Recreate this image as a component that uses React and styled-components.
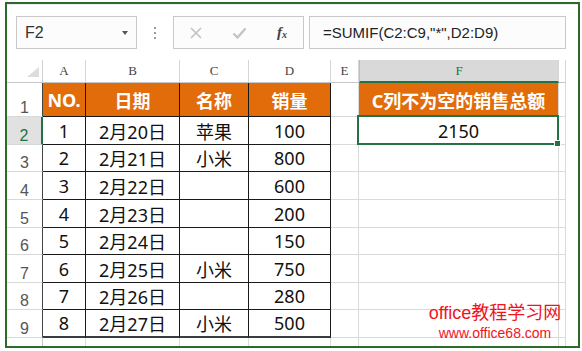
import React from 'react';
import styled, { createGlobalStyle, css } from 'styled-components';

const GREEN = '#217346';
const ORANGE = '#e26b0a';
const GRID = '#dadada';
const INK = '#1a1a1a';

const GlobalStyle = createGlobalStyle`
  html, body { margin: 0; padding: 0; background: #fff; }
  body { font-family: "Noto Sans", "Noto Sans CJK SC", sans-serif; }
`;

const Frame = styled.div`
  position: relative;
  box-sizing: border-box;
  width: 575px;
  height: 346px;
  margin: 2px 0 0 5px;
  border: 2px solid #2e6b2a;
  background: #fff;
  overflow: hidden;
  display: flex;
  flex-direction: column;
`;

const Toolbar = styled.div`
  flex: none;
  box-sizing: border-box;
  height: 56px;
  display: flex;
  align-items: flex-start;
  padding: 11px 0 0 9px;
  border-top: 1px solid #ededed;
`;

const Box = styled.div`
  box-sizing: border-box;
  height: 33px;
  border: 1px solid #c9c9c9;
  background: #fcfcfc;
  display: flex;
  align-items: center;
`;

const NameBox = styled(Box)`
  width: 121px;
  justify-content: space-between;
  padding: 0 8px 0 8px;
  font-family: "Liberation Sans", sans-serif;
  font-size: 16px;
  color: #333;
`;

const Caret = styled.span`
  width: 0;
  height: 0;
  border-left: 3px solid transparent;
  border-right: 3px solid transparent;
  border-top: 4px solid #555;
`;

const Dots = styled.div`
  width: 36px;
  height: 33px;
  display: flex;
  flex-direction: column;
  align-items: center;
  justify-content: center;
  gap: 3px;
`;

const Dot = styled.span`
  width: 2px;
  height: 2px;
  background: #9a9a9a;
`;

const FxBox = styled(Box)`
  width: 131px;
  padding-left: 16px;
  gap: 30px;
`;

const Fx = styled.span`
  font-family: "Liberation Serif", serif;
  font-style: italic;
  font-weight: bold;
  font-size: 15px;
  color: #444;
  sub {
    font-size: 10px;
    vertical-align: baseline;
    position: relative;
    top: 1px;
  }
`;

const Formula = styled(Box)`
  width: 257px;
  margin-left: 5px;
  padding-left: 13px;
  font-family: "Liberation Sans", sans-serif;
  font-size: 15px;
  color: #222;
`;

const Sheet = styled.div`
  flex: 1;
  display: grid;
  grid-template-columns: 36px 43px 94px 69px 82px 28px 200px 7px;
  grid-template-rows: 23px 34px 28px 27px 28px 28px 27px 28px 27px 28px 24px;
  align-content: start;
  justify-content: start;
  overflow: hidden;
`;

const Cell = styled.div`
  box-sizing: border-box;
  display: flex;
  align-items: center;
  justify-content: center;
  border-right: 1px solid ${GRID};
  border-bottom: 1px solid ${GRID};
  min-width: 0;
  white-space: nowrap;
`;

const Corner = styled(Cell)`
  align-items: flex-end;
  justify-content: flex-end;
  padding: 0 3px 5px 0;
  border-right-color: #d0d0d0;
  border-bottom-color: #c6c6c6;
`;

const Triangle = styled.span`
  width: 0;
  height: 0;
  border-left: 12px solid transparent;
  border-bottom: 10px solid #dcdcdc;
`;

const ColHead = styled(Cell)`
  font-family: "Liberation Serif", serif;
  font-size: 13px;
  color: #444;
  border-right-color: #d6d6d6;
  border-bottom-color: #c6c6c6;
  ${(p) =>
    p.$selected &&
    css`
      background: #d9d9d9;
      color: ${GREEN};
      border-bottom: 2px solid ${GREEN};
      border-left: 1px solid #bdbdbd;
    `}
`;

const RowHead = styled(Cell)`
  align-items: flex-end;
  font-family: "Liberation Sans", sans-serif;
  font-size: 16px;
  line-height: 16px;
  color: #555;
  border-bottom-color: #d8d8d8;
  border-right-color: ${(p) => (p.$edge ? '#444' : '#c6c6c6')};
  ${(p) =>
    p.$selected &&
    css`
      background: #e1e1e1;
      color: ${GREEN};
      border-right: 2px solid ${GREEN};
    `}
`;

const Title = styled(Cell)`
  background: ${ORANGE};
  color: #fff;
  font-weight: bold;
  font-size: 18px;
  border-right-color: ${(p) => (p.$boxed ? INK : GRID)};
  border-bottom-color: ${(p) => (p.$boxed ? INK : GRID)};
`;

const Data = styled(Cell)`
  font-size: 18px;
  color: #111;
  border-right-color: ${INK};
  border-bottom: ${(p) => (p.$last ? `2px solid #3c3c3c` : `1px solid ${INK}`)};
`;

const Result = styled(Cell)`
  position: relative;
  font-size: 18px;
  color: #111;
`;

const Selection = styled.span`
  position: absolute;
  left: -2px;
  top: -2px;
  right: -1px;
  bottom: -1px;
  border: 2px solid ${GREEN};
  pointer-events: none;
`;

const Handle = styled.span`
  position: absolute;
  right: -4px;
  bottom: -4px;
  width: 5px;
  height: 5px;
  background: ${GREEN};
  border: 1px solid #fff;
`;

const Watermark = styled.div`
  position: absolute;
  left: 408px;
  top: 298px;
  width: 160px;
  text-align: center;
  color: #f0141e;
  font-family: "Liberation Sans", "Noto Sans CJK SC", sans-serif;
`;

const MarkTitle = styled.div`
  font-size: 18px;
  line-height: 23px;
`;

const MarkUrl = styled.div`
  font-size: 14px;
  line-height: 16px;
`;

const cols = ['A', 'B', 'C', 'D', 'E', 'F', ''];
const rows = [
  [1, '2月20日', '苹果', 100],
  [2, '2月21日', '小米', 800],
  [3, '2月22日', '', 600],
  [4, '2月23日', '', 200],
  [5, '2月24日', '', 150],
  [6, '2月25日', '小米', 750],
  [7, '2月26日', '', 280],
  [8, '2月27日', '小米', 500],
];

function CloseIcon() {
  return (
    <svg width="12" height="12" viewBox="0 0 12 12">
      <path d="M1 1L11 11M11 1L1 11" stroke="#c2c2c2" strokeWidth="1.6" fill="none" />
    </svg>
  );
}

function CheckIcon() {
  return (
    <svg width="15" height="12" viewBox="0 0 15 12">
      <path d="M1.5 6.5L5.5 10.5L13.5 1.5" stroke="#c4c4c4" strokeWidth="2.4" fill="none" />
    </svg>
  );
}

export default function App() {
  return (
    <>
      <GlobalStyle />
      <Frame>
        <Toolbar>
          <NameBox>
            <span>F2</span>
            <Caret />
          </NameBox>
          <Dots>
            <Dot />
            <Dot />
            <Dot />
          </Dots>
          <FxBox>
            <CloseIcon />
            <CheckIcon />
            <Fx>
              f<sub>x</sub>
            </Fx>
          </FxBox>
          <Formula>=SUMIF(C2:C9,"*",D2:D9)</Formula>
        </Toolbar>
        <Sheet>
          <Corner>
            <Triangle />
          </Corner>
          {cols.map((c, i) => (
            <ColHead key={i} $selected={c === 'F'}>
              {c}
            </ColHead>
          ))}

          <RowHead $edge>1</RowHead>
          <Title $boxed>NO.</Title>
          <Title $boxed>日期</Title>
          <Title $boxed>名称</Title>
          <Title $boxed>销量</Title>
          <Cell />
          <Title>C列不为空的销售总额</Title>
          <Cell />

          {rows.map((r, i) => {
            const n = i + 2;
            const last = i === rows.length - 1;
            return (
              <React.Fragment key={n}>
                <RowHead $edge $selected={n === 2}>
                  {n}
                </RowHead>
                {r.map((v, j) => (
                  <Data key={j} $last={last}>
                    {v}
                  </Data>
                ))}
                <Cell />
                {n === 2 ? (
                  <Result>
                    2150
                    <Selection>
                      <Handle />
                    </Selection>
                  </Result>
                ) : (
                  <Cell />
                )}
                <Cell />
              </React.Fragment>
            );
          })}

          <RowHead>10</RowHead>
          {cols.map((c, i) => (
            <Cell key={i} />
          ))}
        </Sheet>
        <Watermark>
          <MarkTitle>office教程学习网</MarkTitle>
          <MarkUrl>www.office68.com</MarkUrl>
        </Watermark>
      </Frame>
    </>
  );
}
